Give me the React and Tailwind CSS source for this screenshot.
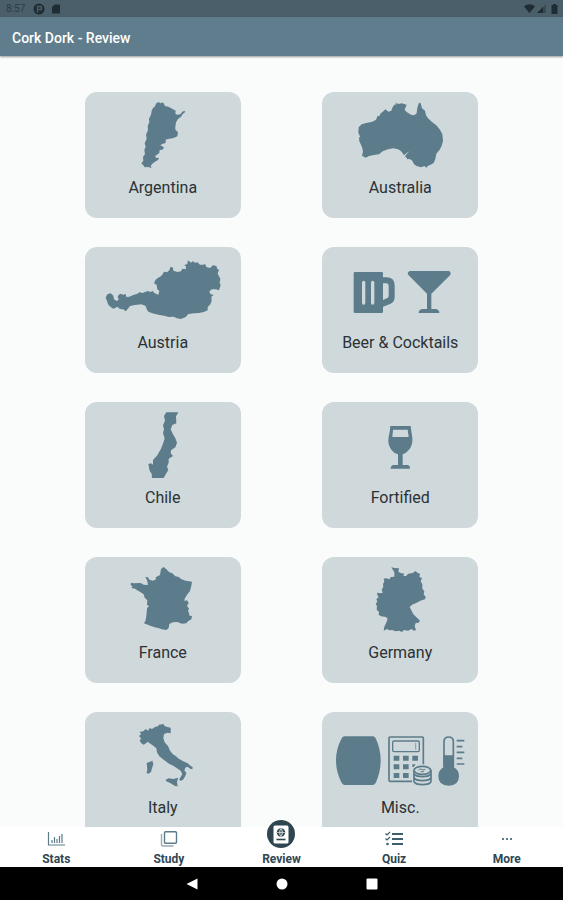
import React from "react";

const Argentina = () => (
  <svg viewBox="15 12 468 240" className="w-full fill-[#5c7b8b]" aria-hidden="true">
    <path d="M229 46L236 42 241 46 249 43 255 54 265 56 274 61 287 68 286 77 292 80 301 79 307 71 314 68 315 73 308 78 303 86 294 93 288 103 286 116 286 125 294 133 292 145 281 150 264 153 257 155 257 165 246 168 241 173 248 175 252 179 247 185 239 186 238 195 231 200 225 205 229 210 237 209 234 216 225 221 216 228 212 235 215 240 204 237 194 238 189 230 184 227 190 218 189 207 195 198 193 186 197 176 194 166 200 152 198 140 204 126 203 114 208 103 207 92 213 80 215 68 219 60 224 56z" />
  </svg>
);

const Australia = () => (
  <svg viewBox="12 12 468 240" className="w-full fill-[#5c7b8b]" aria-hidden="true">
    <path d="M229 50L236 49 232 44 242 48 251 46 266 50 263 57 260 66 267 73 279 80 289 82 296 76 298 59 303 44 308 46 312 61 321 68 324 82 330 91 342 102 355 112 366 125 373 139 375 158 371 173 365 185 355 197 352 213 347 225 338 230 330 233 325 239 319 234 309 238 296 234 288 229 283 218 275 213 266 210 261 205 268 196 275 190 267 194 258 202 254 196 248 188 240 184 226 181 210 184 194 190 183 199 168 201 153 204 143 209 132 203 135 191 132 177 124 160 123 148 127 148 121 134 122 118 131 109 145 105 163 101 174 95 179 83 184 85 187 77 196 70 202 64 211 71 220 68 223 59z" />
    <path d="M267 208h10l-3 5-7 1z" />
  </svg>
);

const Austria = () => (
  <svg viewBox="15 12 468 240" className="w-full fill-[#5c7b8b]" aria-hidden="true">
    <path d="M77 164L82 154 92 151 100 158 102 169 110 174 116 170 113 160 120 152 130 155 137 153 139 162 148 161 162 155 171 153 178 148 188 150 195 147 204 144 211 147 219 144 222 149 229 153 235 155 238 144 232 139 230 125 223 122 224 115 230 107 240 101 246 97 252 86 261 88 268 82 272 71 279 74 280 83 293 87 303 85 307 77 317 79 318 70 312 67 322 63 324 52 333 59 338 55 346 59 352 58 360 65 368 65 376 64 379 72 390 75 399 67 409 69 412 78 417 80 413 92 421 107 419 120 422 126 417 142 408 139 396 139 388 145 391 153 401 156 394 161 395 174 391 184 383 192 383 202 371 207 357 210 343 211 325 213 317 222 303 228 291 226 281 221 266 222 252 218 235 215 217 211 205 206 200 199 197 189 184 184 165 186 150 189 145 196 137 205 130 199 120 198 112 191 107 194 100 197 91 191 84 184 82 176z" />
  </svg>
);

const BeerCocktails = () => (
  <svg viewBox="12 12 468 240" className="w-full fill-[#5c7b8b]" aria-hidden="true">
    <path
      fillRule="evenodd"
      d="M111 87h80q4 0 4 4v12h10q25 0 25 25v35q0 14-12 19l-23 9v15q0 4-4 4h-80q-4 0-4-4v-115q0-4 4-4zM195 121v50l13-6q4-2 4-6v-30q0-8-8-8zM132 119v60q0 6 5 6t5-6v-60q0-6-5-6t-5 6zM159 119v60q0 6 5 6t5-6v-60q0-6-5-6t-5 6z"
    />
    <path d="M275 84h118q8 4 3 13l-56 55v46h13q11 2 11 12h-62q0-10 11-12h14v-46l-55-55q-7-8 3-13z" />
  </svg>
);

const Chile = () => (
  <svg viewBox="15 10 468 240" className="w-full fill-[#5c7b8b]" aria-hidden="true">
    <path d="M259 41L295 41 288 53 289 74 277 79 272 92 279 107 286 119 291 132 286 146 273 155 272 164 279 172 266 180 266 192 261 204 265 214 258 225 251 238 216 238 215 225 209 216 205 196 213 194 219 198 219 184 231 171 243 150 250 132 254 119 249 103 252 92 249 80 255 66 252 52z" />
  </svg>
);

const Fortified = () => (
  <svg viewBox="12 10 468 240" className="w-full fill-[#5c7b8b]" aria-hidden="true">
    <path
      fillRule="evenodd"
      d="M217 82h61q2 18 5 35 2 22-10 36-8 10-19 14v32h14q8 1 8 11h-58q0-9 8-11h14v-32q-13-4-20-14-12-16-8-38 4-17 5-33zM225 93l-2 22h49l-3-22z"
    />
  </svg>
);

const France = () => (
  <svg viewBox="15 10 468 240" className="w-full fill-[#5c7b8b]" aria-hidden="true">
    <path d="M243 46L251 40 259 47 268 56 277 59 286 68 296 70 303 76 317 81 336 84 334 96 330 112 321 123 314 135 313 142 321 140 326 148 321 156 327 165 324 172 328 180 327 185 336 188 334 197 324 203 319 209 306 210 292 205 278 206 268 211 266 223 259 229 245 227 235 223 224 221 211 216 192 209 197 200 200 178 201 163 207 158 201 153 202 140 194 132 191 122 181 115 172 110 165 105 154 103 158 98 152 95 153 87 162 89 182 88 191 93 204 94 202 82 196 70 204 71 208 78 219 81 228 77 227 71 240 64z" />
  </svg>
);

const Germany = () => (
  <svg viewBox="12 10 468 240" className="w-full fill-[#5c7b8b]" aria-hidden="true">
    <path d="M220 41L230 43 243 44 241 54 248 58 259 60 256 66 263 68 271 60 284 58 293 52 298 57 306 60 304 69 312 74 308 83 313 92 313 105 319 113 317 122 323 130 321 137 307 141 296 147 282 153 275 160 280 170 286 182 297 192 306 201 302 207 293 208 290 217 294 229 287 231 281 226 270 231 258 229 252 235 243 231 233 233 222 229 213 230 208 226 197 231 199 219 206 204 209 195 204 190 190 188 182 184 183 175 176 168 177 157 173 151 178 144 175 136 182 131 178 124 177 117 188 119 194 117 191 109 196 99 195 91 199 84 197 75 205 74 215 77 218 70 229 69 229 56z" />
  </svg>
);

const Italy = () => (
  <svg viewBox="15 11 468 240" className="w-full fill-[#5c7b8b]" aria-hidden="true">
    <path d="M178 71L190 69 197 62 204 67 209 59 216 62 225 56 234 54 237 49 250 47 254 53 262 56 272 58 272 75 263 73 252 77 250 89 254 102 264 113 270 127 278 137 290 145 294 150 308 158 323 165 332 173 338 176 337 183 331 181 322 175 316 178 313 186 319 194 316 203 309 214 301 218 298 213 302 206 307 197 302 187 291 180 281 173 267 166 252 155 238 144 231 132 229 120 220 112 209 105 203 100 198 105 191 109 183 104 179 95 184 91 177 83 184 77z" />
    <path d="M200 164L210 160 217 157 220 167 216 180 213 191 205 196 200 194 202 183z" />
    <path d="M257 214L266 210 280 212 295 208 291 220 293 234 285 233 272 225 259 219z" />
  </svg>
);

const Misc = () => (
  <svg viewBox="727 11 468 240" className="w-full fill-[#5c7b8b]" aria-hidden="true">
    <path d="M794 84h86q6 0 9 8 14 30 14 64t-14 66q-3 8-9 8h-86q-6 0-9-8-16-32-16-66t16-64q3-8 9-8z" />
    <g fill="none" stroke="#5c7b8b" strokeWidth="4">
      <path d="M997 219h-66q-3 0-3-3V89q0-3 3-3h97q3 0 3 3v79" strokeWidth="5" />
      <rect x="939" y="98" width="80" height="32" rx="4" />
      <path d="M1008 104v20" strokeWidth="2" />
      <path d="M1093 174v-74q0-14 14-14t14 14v74" strokeWidth="5" />
      <path d="M1131 97h23M1131 115h17M1131 132h23M1131 150h17M1131 167h23" strokeWidth="5" />
    </g>
    <path d="M942 142h17v15h-17zM970 142h17v15h-17zM998 142h17v15h-17zM942 168h17v15h-17zM970 168h17v15h-17zM998 168h10l-6 8h-4zM942 194h17v15h-17zM970 194h17v15h-17z" />
    <path d="M1091 141h32v36q15 9 15 26 0 29-31 29t-31-29q0-17 15-26z" />
    <g fill="#cfd8da" stroke="#5c7b8b" strokeWidth="5">
      <path d="M1003 211v9c5 12 46 12 51 0v-9z" />
      <path d="M1003 199v9c5 12 46 12 51 0v-9z" />
      <path d="M1003 187v9c5 12 46 12 51 0v-9z" />
      <ellipse cx="1028" cy="186" rx="25" ry="12" />
      <path d="M1016 186q3-6 10-3t11 0M1023 190h10" fill="none" strokeWidth="3" />
    </g>
  </svg>
);

const topics = [
  { name: "Argentina", Art: Argentina },
  { name: "Australia", Art: Australia },
  { name: "Austria", Art: Austria },
  { name: "Beer & Cocktails", Art: BeerCocktails },
  { name: "Chile", Art: Chile },
  { name: "Fortified", Art: Fortified },
  { name: "France", Art: France },
  { name: "Germany", Art: Germany },
  { name: "Italy", Art: Italy },
  { name: "Misc.", Art: Misc },
];

const StatsIcon = () => (
  <svg viewBox="0 0 18 16" className="w-[18px] h-4" fill="none" stroke="#5c7b8b" aria-hidden="true">
    <path d="M1.5 1v13H18" strokeWidth="1.2" />
    <path d="M5 12V9M7.500 12V6M10 12V8M12.500 12V5M15 12V3" strokeWidth="1.2" />
  </svg>
);

const StudyIcon = () => (
  <svg viewBox="0 0 18 16" className="w-[18px] h-4" fill="none" stroke="#5c7b8b" aria-hidden="true">
    <rect x="4.500" y="0.700" width="12" height="11.500" rx="1" strokeWidth="1.4" />
    <path d="M1.500 3v10.500q0 1.500 1.500 1.500h10.500" stroke="#9aabb5" strokeWidth="1.4" />
  </svg>
);

const ReviewIcon = () => (
  <svg viewBox="0 0 28 28" className="size-7" aria-hidden="true">
    <circle cx="14" cy="14" r="14" fill="#2f4651" />
    <rect x="6.500" y="5.500" width="15" height="18" rx="1.500" fill="#fff" />
    <circle cx="14" cy="12.500" r="4.200" fill="#2f4651" />
    <path d="M10 12.500h8M14 8.500v8M14 8.500q-3.500 4 0 8q3.500-4 0-8" fill="none" stroke="#fff" strokeWidth="0.600" />
    <path d="M9.500 19.500h9" stroke="#2f4651" strokeWidth="1.600" />
  </svg>
);

const QuizIcon = () => (
  <svg viewBox="0 0 18 16" className="w-[18px] h-4" fill="none" stroke="#3b5f6d" aria-hidden="true">
    <path d="M7 3h11M7 8h11M7 13h11" strokeWidth="1.800" />
    <path d="M0.500 2.500l1.500 1.500 3-3M0.500 7.500l1.500 1.500 3-3" strokeWidth="1.200" />
    <circle cx="2.500" cy="13" r="1.300" fill="#3b5f6d" stroke="none" />
  </svg>
);

const MoreIcon = () => (
  <svg viewBox="0 0 18 16" className="w-[18px] h-4 fill-[#5c7b8b]" aria-hidden="true">
    <path d="M4 7h2v2H4zM8 7h2v2H8zM12 7h2v2h-2z" />
  </svg>
);

const tabs = [
  { name: "Stats", Icon: StatsIcon },
  { name: "Study", Icon: StudyIcon },
  { name: "Review", Icon: ReviewIcon, active: true },
  { name: "Quiz", Icon: QuizIcon },
  { name: "More", Icon: MoreIcon },
];

const StatusBar = () => (
  <div className="flex h-[17px] shrink-0 items-center justify-between bg-[#4a5f69] px-1 text-[#1f2c33]">
    <div className="flex items-center gap-2 pl-0.5">
      <span className="text-[10px] leading-4 text-[#2c3c44]">8:57</span>
      <div className="flex items-center gap-1.5">
        <svg viewBox="0 0 12 12" className="size-3" aria-hidden="true">
          <circle cx="6" cy="6" r="5.500" fill="currentColor" />
          <path d="M4.500 9.500V3.500h4v3h-3" fill="none" stroke="#4a5f69" strokeWidth="1.300" />
        </svg>
        <svg viewBox="0 0 10 10" className="size-2.5 fill-current" aria-hidden="true">
          <path d="M3.500 0.500H8q1 0 1 1v7q0 1-1 1H2q-1 0-1-1V3z" />
        </svg>
      </div>
    </div>
    <div className="flex items-center gap-0.5">
      <svg viewBox="0 0 11 9" className="w-[11px] h-[9px] fill-current" aria-hidden="true">
        <path d="M0 2.500q5.500-4.500 11 0L5.500 9z" />
      </svg>
      <svg viewBox="0 0 9 9" className="size-[9px]" aria-hidden="true">
        <path d="M0 9L9 0V9z" fill="currentColor" opacity="0.400" />
        <path d="M0 9L6 3V9z" fill="currentColor" />
      </svg>
      <svg viewBox="0 0 9 10" className="ml-0.5 w-[9px] h-2.5 fill-current" aria-hidden="true">
        <path d="M3 0h3v1h1.500v9h-6V1H3z" />
      </svg>
    </div>
  </div>
);

const App = () => {
  return (
    <div className="flex h-screen flex-col bg-[#fafbfb] font-['Roboto',sans-serif]">
      <StatusBar />

      <header className="z-10 flex h-[39px] shrink-0 items-center bg-[#607d8d] px-3 pt-0.5 shadow-[0_1px_2px_rgba(0,0,0,0.4)]">
        <h1 className="text-sm font-medium text-white">Cork Dork - Review</h1>
      </header>

      <main className="min-h-0 flex-1 overflow-y-auto px-11 py-9 [scrollbar-width:none]">
        <div className="grid grid-cols-2 justify-items-center gap-y-[29px]">
          {topics.map(({ name, Art }) => (
            <button
              key={name}
              type="button"
              className="flex h-[126px] w-[156px] flex-col items-center rounded-xl bg-[#cfd8da]"
            >
              <Art />
              <span className="mt-1 text-base leading-6 text-[#2b3236]">{name}</span>
            </button>
          ))}
        </div>
      </main>

      <nav className="z-10 grid h-10 shrink-0 grid-cols-5 bg-white">
        {tabs.map(({ name, Icon, active }) => (
          <a
            key={name}
            href={"#" + name.toLowerCase()}
            aria-current={active ? "page" : undefined}
            className="flex h-10 flex-col items-center justify-end text-xs font-bold text-[#2f4651]"
          >
            <span className={active ? "mb-0.5 rounded-full bg-white p-px" : "mb-1"}>
              <Icon />
            </span>
            <span>{name}</span>
          </a>
        ))}
      </nav>

      <div className="flex h-[33px] shrink-0 items-center justify-center gap-[78px] bg-black">
        <button type="button" aria-label="Back">
          <svg viewBox="0 0 12 12" className="size-3 fill-white" aria-hidden="true">
            <path d="M11.500 0.500v11L0.500 6z" />
          </svg>
        </button>
        <button type="button" aria-label="Home">
          <svg viewBox="0 0 12 12" className="size-3 fill-white" aria-hidden="true">
            <circle cx="6" cy="6" r="5.500" />
          </svg>
        </button>
        <button type="button" aria-label="Recent apps">
          <svg viewBox="0 0 12 12" className="size-3 fill-white" aria-hidden="true">
            <rect x="0.500" y="0.500" width="11" height="11" rx="1" />
          </svg>
        </button>
      </div>
    </div>
  );
};

export default App;
